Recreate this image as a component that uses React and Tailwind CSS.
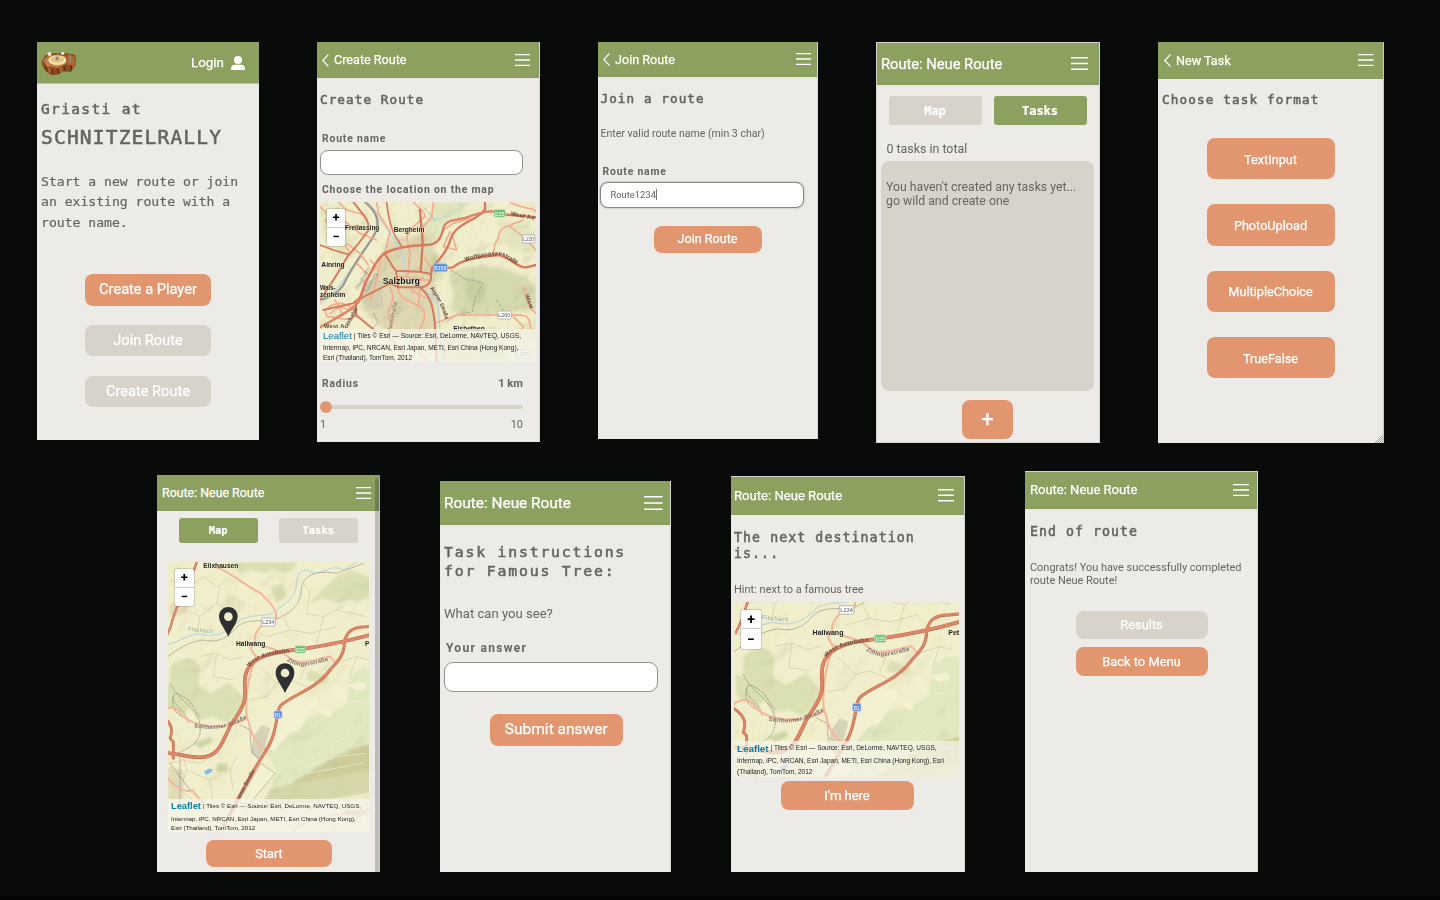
import React from "react";

const MONO = "font-['DejaVu_Sans_Mono',monospace]";

function Burger({ className }) {
  return (
    <svg className={className} viewBox="0 0 16 12" preserveAspectRatio="none" fill="none" stroke="#fff">
      <path d="M0 .7H16M0 6H16M0 11.3H16" strokeWidth="1.3" />
    </svg>
  );
}

function Chevron() {
  return (
    <svg className="h-[13px] w-[7px] shrink-0" viewBox="0 0 7 13" fill="none" stroke="#fff" strokeWidth="1.1">
      <path d="M6.4 .5 L.8 6.5 L6.4 12.5" />
    </svg>
  );
}

function Phone({ className, children }) {
  return (
    <section className={`flex shrink-0 flex-col overflow-hidden bg-[#edebe7] text-[#666462] ${className}`}>
      {children}
    </section>
  );
}

function Bar({ className, title, back, burger }) {
  return (
    <header className={`flex shrink-0 items-center justify-between border-b border-[#859a58] bg-[#8ca15f] text-white ${className}`}>
      <div className={`flex items-center gap-[5px] ${back ? "pt-[1.5px]" : "pt-[0.5px]"}`}>
        {back && <Chevron />}
        <span className="whitespace-nowrap leading-4 [-webkit-text-stroke:0.25px_#fff]">{title}</span>
      </div>
      <Burger className={burger} />
    </header>
  );
}

function Heading({ className, children }) {
  return (
    <h2 className={`shrink-0 whitespace-nowrap [-webkit-text-stroke:0.55px_#666462] ${MONO} ${className}`}>{children}</h2>
  );
}

function Button({ className, children, muted }) {
  return (
    <button
      className={`flex shrink-0 items-center justify-center whitespace-nowrap rounded-lg text-white [-webkit-text-stroke:0.25px_#fff] ${
        muted ? "bg-[#d7d2ca]" : "bg-[#e2966f]"
      } ${className}`}
    >
      {children}
    </button>
  );
}

function Tab({ className, active, children }) {
  return (
    <button
      className={`flex items-center justify-center rounded-[3px] font-bold text-white [-webkit-text-stroke:0.2px_#fff] ${MONO} ${
        active ? "bg-[#8ca15f]" : "bg-[#d7d2ca]"
      } ${className}`}
    >
      {children}
    </button>
  );
}

function ZoomControl({ className, cell }) {
  return (
    <div className={`absolute flex flex-col rounded-[2px] bg-white font-bold text-black shadow-[0_0_1px_1px_rgba(0,0,0,0.15)] ${className}`}>
      <button className={`flex items-center justify-center border-b border-[#ccc] leading-none ${cell}`}>+</button>
      <button className={`flex items-center justify-center leading-none ${cell}`}>−</button>
    </div>
  );
}

function Attribution({ className, lines, leaf }) {
  return (
    <div className={`absolute bottom-0 left-0 w-full whitespace-nowrap bg-[#f6f4ea]/75 font-['Liberation_Sans',sans-serif] text-[#222] ${className}`}>
      <div className="flex items-center gap-[2px]">
        <span className={`text-[#0b80ac] ${leaf}`}>Leaflet</span>
        <span>{lines[0]}</span>
      </div>
      <div>{lines[1]}</div>
      <div>{lines[2]}</div>
    </div>
  );
}

function Shield({ x, y, w = 38, h = 24, fill = "#fff", color = "#555", stroke = "#999", children }) {
  return (
    <g>
      <rect x={x - w / 2} y={y - h / 2} width={w} height={h} rx="4" fill={fill} stroke={stroke} strokeWidth="2" />
      <text x={x} y={y + 6.5} fontSize="17" textAnchor="middle" textLength={w - 6} lengthAdjust="spacingAndGlyphs" fill={color}>{children}</text>
    </g>
  );
}

function Relief({ id, freq, seed, x, y, w, h }) {
  return (
    <>
      <filter id={id} x="0" y="0" width="100%" height="100%">
        <feTurbulence type="fractalNoise" baseFrequency={freq} numOctaves="3" seed={seed} />
        <feDiffuseLighting lightingColor="#fffdf0" surfaceScale="22" diffuseConstant="1.3">
          <feDistantLight azimuth="225" elevation="55" />
        </feDiffuseLighting>
      </filter>
      <rect x={x} y={y} width={w} height={h} filter={`url(#${id})`} opacity="0.2" style={{ mixBlendMode: "multiply" }} />
    </>
  );
}

function CityMap() {
  return (
    <svg className="block h-[160px] w-[216px]" viewBox="30 6 648 480" fontFamily="Liberation Sans, sans-serif">
      <rect x="30" y="6" width="648" height="480" fill="#f1eecd" />
      <filter id="soft-a"><feGaussianBlur stdDeviation="7" /></filter>
      <g filter="url(#soft-a)">
        <path d="M380 6H480L450 60L400 70L380 130L340 120L350 60Z" fill="#dfe5bc" />
        <path d="M420 220C470 190 560 190 620 220C670 240 690 260 680 330C640 340 600 330 560 340C500 350 440 350 420 330C440 280 420 250 420 220Z" fill="#d5daae" />
        <path d="M470 240C510 230 540 260 520 300C490 330 460 310 470 240Z" fill="#c8d0a0" />
        <path d="M560 60L660 70L670 160L600 150Z" fill="#e2e6be" />
        <path d="M390 400L560 380L600 486H400Z" fill="#d9dfb4" />
        <path d="M620 380L678 350V486H640Z" fill="#e2e6be" />
        <path d="M30 30L90 20L110 110L50 120Z" fill="#dfe4b8" />
        <path d="M60 100L150 110L100 170L50 150Z" fill="#e6e8c2" />
        <path d="M230 120L370 100L380 300L380 420L230 400L150 320L210 180Z" fill="#ded7b2" />
        <path d="M370 160C385 150 392 180 384 230L362 200Z" fill="#bfcb94" />
      </g>
      <Relief id="relief-a" freq="0.012" seed="4" x="30" y="6" w="648" h="480" />
      <path d="M160 250L215 240L220 320L190 330L150 300Z" fill="#d3ceb0" />
      <g fill="none" strokeLinejoin="round" strokeLinecap="round">
        <g stroke="#bcd5de" strokeWidth="5">
          <path d="M175 10C215 50 230 90 255 120C275 145 283 180 286 215C300 250 350 265 384 310L390 400L400 486" />
          <path d="M30 312C85 270 110 225 150 170C175 140 190 110 205 70" strokeWidth="4" />
          <path d="M320 85C350 60 400 60 440 30L470 10M660 400L650 440L660 486" strokeWidth="3" />
        </g>
        <g stroke="#8b8b86" strokeWidth="4">
          <path d="M165 6C200 35 215 65 190 110C150 170 120 210 100 255C80 285 50 295 30 300" strokeWidth="8" stroke="#b3b1a4" />
          <path d="M165 6C200 35 215 65 190 110C150 170 120 210 100 255C80 285 50 295 30 300" strokeWidth="2.5" stroke="#807e76" />
          <path d="M420 210C450 220 460 245 490 240L520 250C500 280 490 300 488 335L440 345L410 365M190 340L205 370L180 390M345 25L375 60M560 300L580 330" strokeWidth="2" strokeDasharray="9 6" />
        </g>
        <g stroke="#f5ab8d" strokeWidth="5">
          <path d="M30 20C60 50 70 60 100 60L150 100L200 120M85 6L110 30L165 45M45 60L90 110L120 160M200 6L205 40L240 95L225 160" />
          <path d="M310 6C325 25 345 30 345 50L310 80L290 110L300 160L295 212M370 6L365 50L340 80V130M400 90L430 70L480 55" />
          <path d="M180 180L200 200L165 240L150 290M110 130L150 160L175 195M215 170C200 220 200 260 180 300M140 190L180 230" />
          <path d="M265 262C260 290 290 300 330 320C350 330 345 360 330 386M240 262L250 290L235 340L245 386M330 262L325 320M275 240L300 215M320 240H360M265 230L340 235M300 262C310 285 350 290 360 300" />
          <path d="M45 330C90 290 130 320 140 345C120 370 80 350 50 350ZM60 340L90 320L120 330M75 300L100 345" />
          <path d="M600 6C640 30 670 20 678 35M640 60C600 80 565 75 565 115C550 130 555 150 548 165M600 80L640 110L678 150M420 95L400 140L440 150L425 100" />
          <path d="M375 370L440 345L560 345C600 345 630 340 650 350C670 370 650 390 678 400M640 260C660 290 640 310 678 340M610 350L640 380L620 420M360 200L345 175" />
          <path d="M190 390C240 400 260 440 300 486M330 386L310 430L350 486M60 400L110 440L80 486" />
        </g>
        <g stroke="#d67b5d" strokeWidth="7">
          <path d="M30 382C85 350 150 320 152 290C170 230 200 180 222 160C260 142 300 136 345 135C385 137 395 110 400 85C405 58 440 62 470 52C500 42 520 33 548 34C590 50 630 45 678 52" />
          <path d="M365 205C400 165 412 150 425 110C440 70 505 60 525 28V6" />
          <path d="M330 30L338 130L332 215M362 225L366 208L430 202C450 180 510 170 565 165C600 170 620 205 650 202L678 195" />
          <path d="M130 6C155 40 180 60 176 90C155 120 130 150 112 170C85 220 60 255 30 300" strokeWidth="6" />
          <path d="M30 135L70 150L115 163M230 6C235 55 245 95 262 118L275 140" strokeWidth="5" />
          <path d="M222 160C240 180 245 200 258 212L330 215L362 222C368 245 350 262 330 262H265L258 212" strokeWidth="6" />
          <path d="M330 262C365 290 372 330 376 390L380 486M265 262L240 250L152 295M138 310V345L190 388M152 290L130 310L40 330" strokeWidth="6" />
        </g>
        <path d="M30 382C85 350 150 320 152 290M400 85C405 58 440 62 470 52C500 42 520 33 548 34" stroke="#e58d6c" strokeWidth="3" />
      </g>
      <g fontWeight="bold" fill="#1c1c1c" fontSize="20" stroke="#f3f0d2" strokeWidth="2" paintOrder="stroke">
        <text x="105" y="90" textLength="103" lengthAdjust="spacingAndGlyphs">Freilassing</text>
        <text x="251" y="97" textLength="92" lengthAdjust="spacingAndGlyphs">Bergheim</text>
        <text x="34" y="201" textLength="70" lengthAdjust="spacingAndGlyphs">Ainring</text>
        <text x="30" y="270" textLength="46" lengthAdjust="spacingAndGlyphs">Wals-</text>
        <text x="30" y="291" textLength="76" lengthAdjust="spacingAndGlyphs">zenheim</text>
        <text x="218" y="251" fontSize="26" fill="#111" textLength="112" lengthAdjust="spacingAndGlyphs">Salzburg</text>
        <text x="430" y="392" textLength="94" lengthAdjust="spacingAndGlyphs">Elsbethen</text>
      </g>
      <path id="wolf" d="M466 184C500 172 560 160 580 168C600 178 612 194 640 196" fill="none" />
      <path id="aigner" d="M360 265C385 300 395 320 410 370" fill="none" />
      <g fill="#5d4337" fontSize="17" fontWeight="bold">
        <text><textPath href="#wolf" textLength="165">Wolfgangseestraße</textPath></text>
        <text fontSize="16"><textPath href="#aigner">Aigner Straße</textPath></text>
        <text x="602" y="46" transform="rotate(10 602 46)" textLength="72">West Au</text>
        <text x="42" y="384" textLength="72">West Au</text>
        <text x="116" y="378" transform="rotate(-62 116 378)" textLength="58">tobahn</text>
        <text x="242" y="400" fill="#7c735e" fontWeight="normal" transform="rotate(-78 242 400)" textLength="96">Moosstraße</text>
        <text x="146" y="270" fill="#9b9a8c" fontWeight="normal" transform="rotate(-62 146 270)">Flughafen</text>
        <text x="172" y="280" fill="#9b9a8c" fontWeight="normal" transform="rotate(-62 172 280)">Salzburg</text>
        <text x="645" y="285" transform="rotate(70 645 285)">Wiest</text>
      </g>
      <Shield x={569} y={40} w={34} h={23} fill="#6fbf73" color="#fff" stroke="#cde6bd">E55</Shield>
      <Shield x={391} y={203} w={42} fill="#5b8ee0" color="#fff" stroke="#b9cdf0">B158</Shield>
      <Shield x={656} y={117}>L220</Shield>
      <Shield x={583} y={345} w={42}>L260</Shield>
      <Shield x={638} y={462} w={42}>L107</Shield>
    </svg>
  );
}

function Countryside({ id, full }) {
  return (
    <g>
      <rect x="-20" y="270" width="740" height="830" fill="#f1eecd" />
      <filter id={`soft-${id}`}><feGaussianBlur stdDeviation="3" /></filter>
      <g filter={`url(#soft-${id})`} fill="#dbe0b4">
        <path d="M240 277H440L430 300L400 310L370 300L340 310L300 300L270 310Z" />
        <path d="M480 400C500 370 530 350 560 320L600 300L660 320V380L620 400L600 390L560 400L520 385Z" />
        <path d="M360 350L400 340L410 380L380 400Z" />
        <path d="M60 590C90 560 130 555 150 590L145 650L180 670L240 640L280 680L270 720L230 760L190 740L150 750L110 700L60 680Z" />
        <path d="M40 640L100 660L130 700L100 740L40 700Z" />
        <path d="M240 370L290 400L260 440L220 420Z" opacity=".6" />
        <path d="M420 760C480 730 540 740 590 700L600 620L640 590H700V960L560 980L420 1000L360 970L380 900L350 850L380 800Z" fill="#e0e8c0" />
        <path d="M520 880C570 850 620 830 690 815V900C620 920 560 930 500 960C450 970 400 960 440 930Z" fill="#cfcd9c" />
        <path d="M360 960C440 930 560 930 690 890V960C600 980 500 1000 330 1010Z" fill="#d6d7aa" />
        <path d="M130 820L180 800L190 815L150 835ZM200 880L235 880L230 905L200 905Z" fill="#cdd6a6" />
        <path d="M60 400L120 380L110 430L60 440Z" fill="#e3d9b6" />
        <path d="M55 890L100 900V990H55Z" fill="#e1dab8" />
        <path d="M480 600L540 620L520 640L470 630Z" />
      </g>
      <Relief id={`relief-${id}`} freq="0.008" seed="11" x="-20" y="270" w="740" h="830" />
      <g fill="#f4f1d3">
        <path d="M400 700C430 690 450 670 470 690C490 670 510 690 500 710C470 715 480 745 460 760C450 790 420 780 410 800L370 845L355 835L378 790Z" />
        <path d="M510 715C530 700 550 715 545 740C530 745 520 735 510 715ZM550 650C580 640 570 670 590 690C570 700 550 680 550 650ZM590 640C610 650 640 620 650 650C630 670 610 660 590 640Z" />
        <path d="M333 880L375 910L300 1000H262Z" stroke="#a8a48c" strokeWidth="2" />
      </g>
      <path d="M310 800L335 765L360 775L345 830L325 868L302 850Z" fill="#d6d2b8" />
      <path d="M162 905L175 896L190 897L185 906L168 915Z" fill="#86bce8" />
      <g fill="none" stroke="#cfcaa6" strokeWidth="2">
        <path d="M60 330L120 350L160 320L200 350L230 330M120 350L110 420L150 440L200 400L260 430M150 440L140 490M200 400L210 350M460 340L480 370L470 430L520 440L560 420L650 440M520 440L500 520M560 420L590 400" />
        <path d="M150 560L200 550L240 570L280 560M200 550L190 620L250 630M330 590L380 640L350 680L300 690M380 640L420 630L470 650M470 580L450 630M560 580L620 560L657 570M620 560L600 620" />
        <path d="M350 500L420 480L480 490L560 470M420 480L400 440M100 860L110 900L90 960L140 1000M110 900L180 930L240 900L260 860M180 930L190 1000M240 900L250 960M60 880L100 870L150 880L200 850" />
        <path d="M440 900L560 860L650 850M450 880L520 840M470 910L640 880M540 830L600 790M620 800L600 830M600 700L657 690" stroke="#efefd4" />
      </g>
      <g fill="none" strokeLinejoin="round" strokeLinecap="round">
        <path d="M20 525C80 530 105 490 150 492C200 505 240 485 272 448C310 432 340 440 365 430C400 405 440 385 440 340C440 300 470 290 490 310C520 310 550 280 580 300L620 277" stroke="#c3d9dc" strokeWidth="4" />
        <path d="M30 580C80 535 120 515 160 510C210 520 235 500 262 470C290 445 340 455 375 450C425 425 452 410 455 350C470 300 520 305 560 310L640 280" stroke="#a9a793" strokeWidth="2.5" strokeDasharray="12 3" />
        <path d="M60 640C90 700 160 720 150 790C140 830 100 840 60 860M70 680C60 700 110 720 115 760M80 670C130 690 130 720 150 740M75 670C60 700 70 730 100 740M270 765L300 780L303 830L310 850L330 870M90 860V1000M60 880L120 960" stroke="#8f8d80" strokeWidth="2" strokeDasharray="8 4" />
        <g stroke="#f4b79b" strokeWidth="6">
          <path d="M200 292C250 310 280 345 330 368C350 390 385 415 378 447C350 450 310 480 314 515L302 535L320 565C295 600 285 690 290 740C305 770 290 790 345 838" />
          <path d="M345 530L395 545L420 565C450 590 500 565 540 560L560 580M20 740C50 700 85 710 95 735C130 770 220 785 290 745M40 900C60 950 110 970 125 960L160 1000" />
          <path d="M430 1086C460 1040 560 1035 680 1015" strokeWidth="5" />
        </g>
        <path d="M140 277C120 340 80 390 62 470L40 520" stroke="#b96c50" strokeWidth="7" />
        <path d="M140 277C120 340 80 390 62 470L40 520" stroke="#e39172" strokeWidth="4" />
        <g stroke="#bd694d" strokeWidth="11">
          <path d="M700 483C620 508 560 522 450 538C370 545 310 560 292 600C275 630 292 670 282 695C270 735 240 760 235 780C215 820 205 862 150 862C110 862 80 848 20 846" />
          <path d="M700 465L650 470C600 470 590 490 583 515C584 560 558 578 540 600C500 655 440 670 400 700C380 712 384 740 376 770C370 800 365 815 352 835L315 895L265 985L220 1070" strokeWidth="9" />
          <path d="M30 735C65 755 70 780 60 805L70 815V865" strokeWidth="8" />
        </g>
        <g stroke="#df8867" strokeWidth="7.5">
          <path d="M700 483C620 508 560 522 450 538C370 545 310 560 292 600C275 630 292 670 282 695C270 735 240 760 235 780C215 820 205 862 150 862C110 862 80 848 20 846" />
          <path d="M700 465L650 470C600 470 590 490 583 515C584 560 558 578 540 600C500 655 440 670 400 700C380 712 384 740 376 770C370 800 365 815 352 835L315 895L265 985L220 1070" strokeWidth="6" />
          <path d="M30 735C65 755 70 780 60 805L70 815V865" strokeWidth="5" />
        </g>
        <path id={`wa-${id}`} d="M298 592C315 565 360 552 425 547" />
        <path id={`zs-${id}`} d="M410 572C450 600 480 585 545 570" />
        <path id={`ss-${id}`} d="M132 772C180 782 230 780 292 744" />
      </g>
      <g fontWeight="bold" fill="#222" fontSize="20" stroke="#f1eecd" strokeWidth="2" paintOrder="stroke">
        {full && <text x="160" y="293" textLength="105" lengthAdjust="spacingAndGlyphs">Elixhausen</text>}
        <text x="258" y="527" textLength="88" lengthAdjust="spacingAndGlyphs">Hallwang</text>
        <text x="645" y="528">{full ? "P" : "Pet"}</text>
      </g>
      <g fontSize="17" fontWeight="bold" fill="#6a4a3c">
        <text><textPath href={`#wa-${id}`} textLength="132">West Autobahn</textPath></text>
        <g fill="#77706a">
          <text><textPath href={`#zs-${id}`} textLength="130">Zillingerstraße</textPath></text>
          <text><textPath href={`#ss-${id}`} textLength="165">Söllheimer Straße</textPath></text>
        </g>
        <text x="113" y="482" fill="#8fa6ae" fontWeight="normal" transform="rotate(6 113 482)" textLength="76">Fischach</text>
        {full && (
          <>
            <text x="270" y="985" transform="rotate(-62 270 985)" textLength="95">ener Straße</text>
            <text x="586" y="1035" fill="#8a8a80" fontSize="19" fontWeight="normal" textLength="68">Gugger</text>
          </>
        )}
      </g>
      <Shield x={355} y={456} w={42}>L234</Shield>
      <Shield x={451} y={538} w={32} h={22} fill="#6fbf73" color="#fff" stroke="#cde6bd">E55</Shield>
      <Shield x={384} y={734} w={24} h={22} fill="#5b8ee0" color="#fff" stroke="#b9cdf0">B1</Shield>
    </g>
  );
}

function Pin({ x, y }) {
  return (
    <path
      transform={`translate(${x} ${y})`}
      fill="#303032"
      fillRule="evenodd"
      d="M0 -89C16 -89 28 -77 28 -61C28 -42 12 -26 0 0C-12 -26 -28 -42 -28 -61C-28 -77 -16 -89 0 -89ZM0 -73A13 13 0 1 0 0 -47A13 13 0 1 0 0 -73Z"
    />
  );
}

function Logo() {
  return (
    <svg className="h-[27px] w-[37px]" viewBox="30 36 111 82">
      <path d="M35 72L46 54L70 48H112L136 54L139 66L136 90L122 106L98 104L84 114L62 115L46 102L36 86Z" fill="#8f4c20" />
      <path d="M38 70L58 54L108 58L110 80L84 94L50 88Z" fill="#c27f3e" />
      <path d="M110 54L136 60L134 82L114 86Z" fill="#b06a33" />
      <path d="M44 90L52 104M66 98L68 112M82 96L86 110M102 88L106 102M124 86L124 102" stroke="#5c2c10" strokeWidth="4" />
      <path d="M56 94L60 108M92 92L94 106M130 82L130 94" stroke="#c88244" strokeWidth="3" />
      <ellipse cx="82" cy="70" rx="27" ry="15" fill="#efe2b4" />
      <ellipse cx="82" cy="68" rx="20" ry="10" fill="#dcc27a" />
      <path d="M83 38V68M121 50V78M50 72L54 92" stroke="#8f959a" strokeWidth="3" />
      <circle cx="58" cy="51" r="6" fill="#e4e6e4" />
      <circle cx="98" cy="49" r="5" fill="#e4e6e4" />
      <circle cx="81" cy="66" r="4.5" fill="#78828c" />
    </svg>
  );
}

const LABEL = "shrink-0 whitespace-nowrap text-[10.4px] font-bold leading-4 tracking-[0.82px]";

export default function App() {
  return (
    <main className="flex h-[900px] w-[1440px] flex-col overflow-hidden bg-[#090b0a] font-['Roboto',sans-serif]">
      <div className="flex h-[471px] shrink-0 items-start gap-[58px] pl-[37px] pt-[42px]">
        <Phone className="h-[398px] w-[222px]">
          <header className="flex h-[42px] shrink-0 items-center justify-between border-b border-[#b9c49c] bg-[#8ca15f] pl-[3px] pr-[14px] text-white">
            <Logo />
            <div className="flex items-center gap-[7px] pt-px">
              <span className="text-[13.4px] [-webkit-text-stroke:0.25px_#fff]">Login</span>
              <svg className="h-[14px] w-[14px]" viewBox="0 0 14 14" fill="#fff">
                <circle cx="7" cy="4" r="4" />
                <path d="M0 13.2C0 10.3 1.6 8.8 4 8.8H10C12.4 8.8 14 10.3 14 13.2Q14 14 13.2 14H.8Q0 14 0 13.2Z" />
              </svg>
            </div>
          </header>
          <div className="flex flex-col pl-[4px]">
            <Heading className="mt-[15px] text-[14.5px] leading-5 tracking-[1.35px]">Griasti at</Heading>
            <Heading className="mt-[4.5px] text-[19.5px] leading-7 tracking-[1.2px]">SCHNITZELRALLY</Heading>
            <p className={`mt-[20.5px] w-[210px] text-[13.1px] leading-[20.3px] [-webkit-text-stroke:0.2px_#666462] ${MONO}`}>
              Start a new route or join an existing route with a route name.
            </p>
          </div>
          <div className="mt-[41.5px] flex flex-col items-center gap-[19.5px]">
            <Button className="h-[31.3px] w-[126px] text-[14.6px]">Create a Player</Button>
            <Button muted className="h-[31.3px] w-[126px] text-[14.6px]">Join Route</Button>
            <Button muted className="h-[31.3px] w-[126px] text-[14.6px]">Create Route</Button>
          </div>
        </Phone>

        <Phone className="h-[400px] w-[223px] border-r border-[#d5d3cf]">
          <Bar back title="Create Route" className="h-[36px] pl-[5px] pr-[9px] text-[12.6px]" burger="h-[12px] w-[15px]" />
          <div className="flex flex-col pl-[3px]">
            <Heading className="mt-[12px] text-[12.6px] leading-5 tracking-[1.1px]">Create Route</Heading>
            <label className={`mt-[21px] pl-[2px] ${LABEL}`}>Route name</label>
            <div className="mt-[3px] h-[24.5px] w-[203px] rounded-lg border border-[#919191] bg-white" />
            <label className={`mt-[7.5px] pl-[2px] ${LABEL}`}>Choose the location on the map</label>
            <div className="relative mt-[4px] h-[160px] w-[216px] overflow-hidden">
              <CityMap />
              <ZoomControl className="left-[7px] top-[7px] text-[13px]" cell="h-[18.5px] w-[18px]" />
              <Attribution
                className="h-[33px] pl-[3px] text-[6.55px] leading-[10.3px]"
                leaf="text-[9.6px] leading-[13.5px]"
                lines={[
                  "| Tiles © Esri — Source: Esri, DeLorme, NAVTEQ, USGS,",
                  "Intermap, iPC, NRCAN, Esri Japan, METI, Esri China (Hong Kong),",
                  "Esri (Thailand), TomTom, 2012",
                ]}
              />
            </div>
            <div className="mt-[14px] flex w-[203px] items-center justify-between pl-[2px]">
              <span className={LABEL}>Radius</span>
              <span className="text-[11.2px] font-bold leading-4">1 km</span>
            </div>
            <div className="mt-[9px] flex h-[12px] w-[203px] items-center">
              <div className="h-[12px] w-[12px] rounded-full bg-[#e2966f]" />
              <div className="h-[4px] flex-1 rounded-r-full bg-[#d7d2ca]" />
            </div>
            <div className="mt-[4px] flex w-[203px] justify-between text-[11px] leading-4">
              <span>1</span>
              <span>10</span>
            </div>
          </div>
        </Phone>

        <Phone className="h-[397px] w-[220px] border-r border-[#d5d3cf]">
          <Bar back title="Join Route" className="h-[35px] pl-[5px] pr-[6.5px] text-[12.6px]" burger="h-[12px] w-[15px]" />
          <div className="flex flex-col pl-[2.5px]">
            <Heading className="mt-[12px] text-[12.6px] leading-5 tracking-[1.1px]">Join a route</Heading>
            <p className="mt-[17px] whitespace-nowrap text-[10.55px] leading-4">Enter valid route name (min 3 char)</p>
            <label className={`mt-[22px] pl-[2px] ${LABEL}`}>Route name</label>
            <div className="-ml-[0.5px] mt-[2px] flex h-[25.5px] w-[203.5px] items-center rounded-lg border-[1.5px] border-[#858585] bg-white pl-[9.5px] text-[9.4px] shadow-[0_0_2px_rgba(0,0,0,0.35)]">
              <span>Route1234</span>
              <span className="h-[11px] w-px bg-[#777]" />
            </div>
          </div>
          <Button className="mt-[18px] h-[27px] w-[108px] self-center text-[12.6px]">Join Route</Button>
        </Phone>

        <Phone className="h-[401px] w-[224px] border border-[#d5d3cf]">
          <Bar title="Route: Neue Route" className="h-[42px] pl-[4px] pr-[11px] text-[14.7px]" burger="h-[13px] w-[17.5px]" />
          <div className="mt-[11px] flex gap-[12px] pl-[11.5px]">
            <Tab className="h-[29px] w-[93px] text-[12px]">Map</Tab>
            <Tab active className="h-[29px] w-[93px] text-[12px]">Tasks</Tab>
          </div>
          <p className="mt-[16px] pl-[9.5px] text-[12.4px] leading-4">0 tasks in total</p>
          <div className="mx-[4px] mt-[3.5px] h-[230.5px] w-[213px] whitespace-nowrap rounded-lg bg-[#d7d2ca] pl-[5px] pt-[19px] text-[12.3px] leading-[14.7px]">
            You haven't created any tasks yet...
            <br />
            go wild and create one
          </div>
          <Button className="mr-px mt-[8.5px] h-[39.5px] w-[50.5px] self-center text-[22px]">+</Button>
        </Phone>

        <Phone className="h-[401px] w-[226px] border-r border-[#c9c7c3]">
          <Bar back title="New Task" className="h-[37px] pl-[6px] pr-[9.5px] text-[12.6px]" burger="h-[12px] w-[15.5px]" />
          <Heading className="mt-[11px] pl-[4px] text-[12.6px] leading-5 tracking-[1.17px]">Choose task format</Heading>
          <div className="mt-[28px] flex flex-col items-center gap-[24.9px]">
            {["TextInput", "PhotoUpload", "MultipleChoice", "TrueFalse"].map((t) => (
              <Button key={t} className="h-[41.4px] w-[128px] pt-[1.5px] text-[12.7px]">{t}</Button>
            ))}
          </div>
          <svg className="mt-auto h-[8px] w-[8px] self-end" viewBox="0 0 8 8" stroke="#9c9a97" strokeWidth="0.9">
            <path d="M0 8L8 0M2 8L8 2M4 8L8 4M6 8L8 6" />
          </svg>
        </Phone>
      </div>

      <div className="flex h-[401px] shrink-0 items-end gap-[60px] pl-[157px]">
        <Phone className="relative h-[397px] w-[223px]">
          <Bar title="Route: Neue Route" className="h-[36px] pl-[5px] pr-[9px] text-[12.4px]" burger="h-[12px] w-[15px]" />
          <div className="mt-[7px] flex gap-[21.5px] pl-[22px]">
            <Tab active className="h-[25px] w-[78.5px] text-[10.4px]">Map</Tab>
            <Tab className="h-[25px] w-[78.5px] text-[10.4px]">Tasks</Tab>
          </div>
          <div className="relative ml-[11px] mt-[19px] h-[270px] w-[201px] shrink-0 overflow-hidden">
            <svg className="block h-[270px] w-[201px]" viewBox="54 276 603 810" fontFamily="Liberation Sans, sans-serif">
              <Countryside id="b" full />
              <Pin x={235} y={500} />
              <Pin x={405} y={669} />
            </svg>
            <ZoomControl className="left-[7px] top-[7px] text-[13px]" cell="h-[18.5px] w-[18.5px]" />
            <Attribution
              className="h-[33.5px] pl-[3px] text-[6.2px] leading-[9.6px]"
              leaf="text-[9.3px] font-bold leading-[15px]"
              lines={[
                "| Tiles © Esri — Source: Esri, DeLorme, NAVTEQ, USGS,",
                "Intermap, iPC, NRCAN, Esri Japan, METI, Esri China (Hong Kong),",
                "Esri (Thailand), TomTom, 2012",
              ]}
            />
          </div>
          <Button className="ml-[49px] mt-[8px] h-[26.5px] w-[126px] text-[12.7px]">Start</Button>
          <div className="absolute right-0 top-[3px] h-[394px] w-[5px] rounded-t-full border-r border-[#d5d3cf]/60 bg-black/20" />
        </Phone>

        <Phone className="h-[391px] w-[231px] border-r border-[#d5d3cf]">
          <Bar title="Route: Neue Route" className="h-[44px] pl-[4px] pr-[7.5px] text-[15.4px]" burger="h-[14px] w-[18.5px]" />
          <div className="flex flex-col pl-[4px]">
            <Heading className="mt-[17px] text-[14.8px] leading-[19.3px] tracking-[1.8px]">
              Task instructions
              <br />
              for Famous Tree:
            </Heading>
            <p className="mt-[23px] text-[13.1px] leading-5">What can you see?</p>
            <label className="mt-[16px] pl-[2px] text-[12px] font-bold leading-4 tracking-[1.3px]">Your answer</label>
            <div className="-ml-[0.5px] mt-[6px] h-[30px] w-[214px] rounded-[9px] border border-[#919191] bg-white" />
            <Button className="ml-[45.5px] mt-[22px] h-[32.5px] w-[133.5px] text-[15.5px]">Submit answer</Button>
          </div>
        </Phone>

        <Phone className="h-[396px] w-[234px] border-r border-t border-[#d5d3cf]">
          <Bar title="Route: Neue Route" className="h-[38px] pl-[3px] pr-[10px] text-[13.1px]" burger="h-[12.5px] w-[16px]" />
          <div className="flex flex-col pl-[3px]">
            <Heading className="mt-[15px] text-[13.2px] leading-4 tracking-[1.1px]">
              The next destination
              <br />
              is...
            </Heading>
            <p className="mt-[20px] text-[11px] leading-4">Hint: next to a famous tree</p>
            <div className="relative mt-[4px] h-[175px] w-[225px] overflow-hidden">
              <svg className="block h-[175px] w-[225px]" viewBox="30 396 675 525" fontFamily="Liberation Sans, sans-serif">
                <g transform="translate(-5.6 -60) scale(1.052)">
                  <Countryside id="c" />
                </g>
              </svg>
              <ZoomControl className="left-[7px] top-[7.5px] text-[14px]" cell="h-[19.5px] w-[20px]" />
              <Attribution
                className="h-[36px] pl-[3px] text-[6.5px] leading-[10.8px]"
                leaf="text-[9.8px] font-bold leading-[15px]"
                lines={[
                  "| Tiles © Esri — Source: Esri, DeLorme, NAVTEQ, USGS,",
                  "Intermap, iPC, NRCAN, Esri Japan, METI, Esri China (Hong Kong), Esri",
                  "(Thailand), TomTom, 2012",
                ]}
              />
            </div>
            <Button className="ml-[46.5px] mt-[4px] h-[28.5px] w-[133px] text-[13px]">I'm here</Button>
          </div>
        </Phone>

        <Phone className="h-[401px] w-[233px] border-r border-t border-[#d5d3cf]">
          <Bar title="Route: Neue Route" className="h-[37px] pl-[5px] pr-[8.5px] text-[13px]" burger="h-[12px] w-[16px]" />
          <Heading className="mt-[13px] pl-[5px] text-[13.2px] leading-5 tracking-[1.07px]">End of route</Heading>
          <p className="mt-[19px] whitespace-nowrap pl-[5px] text-[10.95px] leading-[13px]">
            Congrats! You have successfully completed
            <br />
            route Neue Route!
          </p>
          <div className="mt-[23.5px] flex flex-col items-center gap-[8px] pl-px">
            <Button muted className="h-[28.8px] w-[132px] text-[12.9px]">Results</Button>
            <Button className="h-[28.8px] w-[132px] text-[12.9px]">Back to Menu</Button>
          </div>
        </Phone>
      </div>
      <div className="mt-auto h-[4px] bg-[#030404]" />
    </main>
  );
}
